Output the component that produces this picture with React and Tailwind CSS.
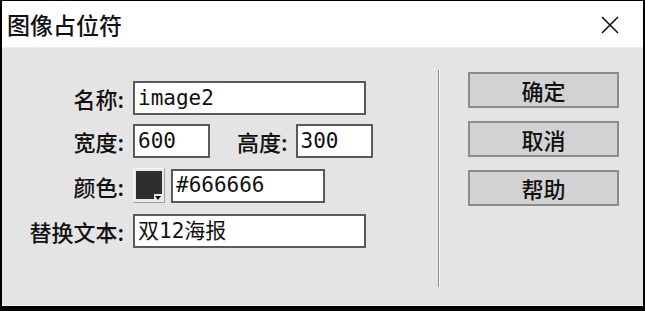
import React from "react";

const cjk = { fontFamily: '"Noto Sans CJK SC", "Noto Sans", sans-serif' };

function Label({ children, className = "" }) {
  return (
    <div
      className={`text-[22px] font-medium leading-none text-[#111] whitespace-nowrap ${className}`}
      style={cjk}
    >
      {children}
    </div>
  );
}

function Field({ value, className = "" }) {
  return (
    <div
      className={`h-[34px] bg-white border-2 border-[#5a5a5a] flex items-center pl-[3px] text-[21px] text-[#111] leading-none overflow-hidden whitespace-nowrap ${className}`}
      style={{ fontFamily: '"DejaVu Sans Mono", "Noto Sans CJK SC", monospace' }}
    >
      {value}
    </div>
  );
}

function Btn({ children }) {
  return (
    <div
      className="w-[151px] h-[36px] bg-[#d2d2d2] border-2 border-[#8c8c8c] flex items-center justify-center text-[22px] font-medium text-[#111] leading-none"
      style={cjk}
    >
      {children}
    </div>
  );
}

export default function App() {
  return (
    <div className="w-[645px] h-[311px] bg-black pt-[1px] pl-[2px] pr-[2px] pb-[5px]">
      <div className="w-full h-full flex flex-col bg-[#e4e4e4]">
        {/* Title bar */}
        <div className="h-[47px] bg-white flex items-center justify-between pl-[5px] pr-[24px] border-b border-[#ececec]">
          <div className="text-[23px] font-medium leading-none text-[#111]" style={cjk}>
            图像占位符
          </div>
          <svg width="18" height="18" viewBox="0 0 18 18" className="mt-[1px]">
            <path d="M1 1 L17 17 M17 1 L1 17" stroke="#111" strokeWidth="1.6" fill="none" />
          </svg>
        </div>
        {/* Body */}
        <div className="flex-1 flex border-b border-[#f4f4f4]">
          {/* Form */}
          <div className="w-[436px] pt-[33px] flex flex-col">
            <div className="flex items-center">
              <Label className="w-[122px] text-right">名称:</Label>
              <Field value="image2" className="ml-[9px] w-[233px] h-[33px]" />
            </div>
            <div className="flex items-center mt-[9px]">
              <Label className="w-[122px] text-right">宽度:</Label>
              <Field value="600" className="ml-[9px] w-[77px]" />
              <Label className="ml-[27px]">高度:</Label>
              <Field value="300" className="ml-[8px] w-[77px]" />
            </div>
            <div className="flex items-center mt-[10px]">
              <Label className="w-[122px] text-right">颜色:</Label>
              <div className="ml-[9px] w-[32px] h-[35px] relative bg-[#e9e9e9] border border-[#a0a0a0] border-t-[#f6f6f6] border-l-[#f6f6f6]">
                <div className="absolute left-[2px] top-[2px] w-[26px] h-[28px] bg-[#2e2e2e]" />
                <div className="absolute right-[2px] bottom-[2px] w-[8px] h-[6px] bg-[#e9e9e9]" />
                <svg className="absolute right-[3px] bottom-[2px]" width="6" height="4" viewBox="0 0 6 4">
                  <path d="M0 0 L6 0 L3 4 Z" fill="#111" />
                </svg>
              </div>
              <Field value="#666666" className="ml-[6px] w-[154px]" />
            </div>
            <div className="flex items-center mt-[11px]">
              <Label className="w-[122px] text-right">替换文本:</Label>
              <Field value="双12海报" className="ml-[9px] w-[233px]" />
            </div>
          </div>
          {/* Separator */}
          <div className="mt-[22px] h-[217px] flex">
            <div className="w-[1px] bg-[#8a8a8a]" />
            <div className="w-[1px] bg-[#fafafa]" />
          </div>
          {/* Buttons */}
          <div className="ml-[28px] pt-[24px] flex flex-col gap-[13px]">
            <Btn>确定</Btn>
            <Btn>取消</Btn>
            <Btn>帮助</Btn>
          </div>
        </div>
      </div>
    </div>
  );
}
